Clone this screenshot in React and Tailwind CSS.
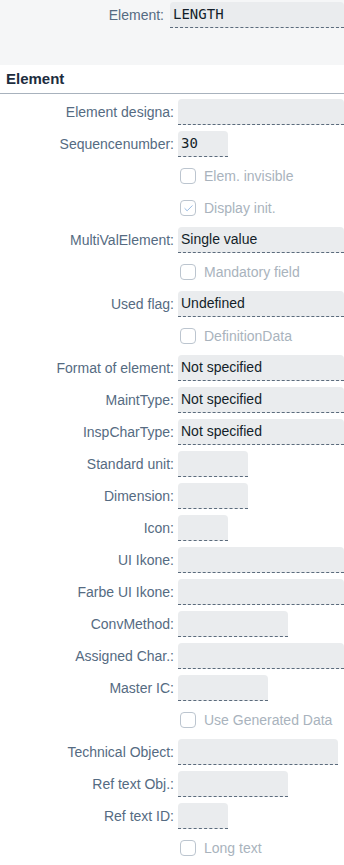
import { Check } from 'lucide-react';

const font = { fontFamily: '"Liberation Sans", Arial, sans-serif' };
const mono = { fontFamily: '"DejaVu Sans Mono", "Liberation Mono", monospace', fontSize: 14 };

const rows = [
  { type: 'field', label: 'Element designa:', width: 'full' },
  { type: 'field', label: 'Sequencenumber:', width: 'w-[50px]', value: '30', mono: true },
  { type: 'check', label: 'Elem. invisible' },
  { type: 'check', label: 'Display init.', checked: true },
  { type: 'field', label: 'MultiValElement:', width: 'full', value: 'Single value' },
  { type: 'check', label: 'Mandatory field' },
  { type: 'field', label: 'Used flag:', width: 'full', value: 'Undefined' },
  { type: 'check', label: 'DefinitionData' },
  { type: 'field', label: 'Format of element:', width: 'full', value: 'Not specified' },
  { type: 'field', label: 'MaintType:', width: 'full', value: 'Not specified' },
  { type: 'field', label: 'InspCharType:', width: 'full', value: 'Not specified' },
  { type: 'field', label: 'Standard unit:', width: 'w-[70px]' },
  { type: 'field', label: 'Dimension:', width: 'w-[70px]' },
  { type: 'field', label: 'Icon:', width: 'w-[50px]' },
  { type: 'field', label: 'UI Ikone:', width: 'full' },
  { type: 'field', label: 'Farbe UI Ikone:', width: 'full' },
  { type: 'field', label: 'ConvMethod:', width: 'w-[110px]' },
  { type: 'field', label: 'Assigned Char.:', width: 'full' },
  { type: 'field', label: 'Master IC:', width: 'w-[90px]' },
  { type: 'check', label: 'Use Generated Data' },
  { type: 'field', label: 'Technical Object:', width: 'w-[160px]' },
  { type: 'field', label: 'Ref text Obj.:', width: 'w-[110px]' },
  { type: 'field', label: 'Ref text ID:', width: 'w-[50px]' },
  { type: 'check', label: 'Long text' },
];

function Field({ row }) {
  const w = row.width === 'full' ? 'flex-1' : row.width;
  return (
    <div className="flex h-8 items-center">
      <div className="w-[174px] shrink-0 text-right text-[14px] text-[#556b82] whitespace-nowrap">
        {row.label}
      </div>
      <div
        className={`${w} ml-1 h-[26px] rounded-t-[4px] bg-[#eaecee] border-b border-dashed border-[#5b6b7c] flex items-center px-[3px] text-[14px] text-[#131e29]`}
        style={row.mono ? mono : undefined}
      >
        {row.value}
      </div>
    </div>
  );
}

function CheckRow({ row }) {
  return (
    <div className="flex h-8 items-center pl-[180px]">
      <div className="w-4 h-4 rounded-[4px] border border-[#bcc5cf] bg-white flex items-center justify-center">
        {row.checked && <Check size={11} strokeWidth={2} color="#8db4e0" />}
      </div>
      <span className="ml-2 text-[14px] text-[#a9b3bd]">{row.label}</span>
    </div>
  );
}

export default function App() {
  return (
    <div className="w-[344px] min-h-screen bg-white overflow-hidden" style={font}>
      <div className="h-[65px] bg-[#f5f6f7] pt-[2px]">
        <div className="flex h-[26px] items-center">
          <div className="w-[164px] shrink-0 text-right text-[14px] text-[#556b82]">Element:</div>
          <div
            className="flex-1 ml-[6px] h-[26px] rounded-t-[4px] bg-[#eaecee] border-b border-dashed border-[#5b6b7c] flex items-center px-[3px] text-[14px] text-[#131e29]"
            style={mono}
          >
            LENGTH
          </div>
        </div>
      </div>
      <div className="h-[29px] flex items-center px-[6px] border-b border-[#a8b2bd]">
        <span className="text-[15px] font-bold text-[#1d2d3e]">Element</span>
      </div>
      <div className="flex flex-col pt-[2px]">
        {rows.map((row, i) =>
          row.type === 'field' ? <Field key={i} row={row} /> : <CheckRow key={i} row={row} />
        )}
      </div>
    </div>
  );
}
